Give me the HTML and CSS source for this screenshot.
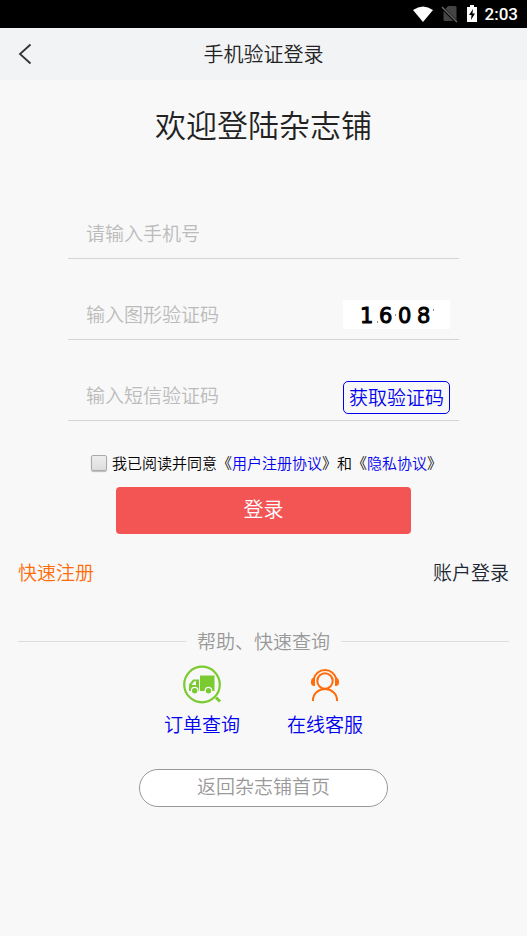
FILE: index.html
```html
<!DOCTYPE html>
<html lang="zh-CN">
<head>
<meta charset="utf-8">
<meta name="viewport" content="width=device-width, initial-scale=1">
<title>手机验证登录</title>
<link rel="stylesheet" href="styles.css">
</head>
<body>
<div class="status-bar">
  <svg width="22" height="18" viewBox="0 0 22 18" aria-hidden="true"><path d="M1 5Q11-2 21 5L11 17Z" fill="#fff"/></svg>
  <svg width="18" height="18" viewBox="0 0 18 18" aria-hidden="true"><path d="M7 1h7q1.500 0 1.500 1.500V16H4q-1.500 0-1.500-1.500V6Z" fill="#444"/><path d="M1 2.500 15.500 17" stroke="#000" stroke-width="3"/><path d="M1 2 16 17" stroke="#666" stroke-width="1.500"/></svg>
  <svg width="12" height="18" viewBox="0 0 12 18" aria-hidden="true"><path d="M1 2h3V0h4v2h3v15H1Z" fill="#fff"/><path d="M7 4 3 10h2.500L5 15l4-6.500H6.500Z" fill="#000"/></svg>
  <span class="clock">2:03</span>
</div>
<header class="header">
  <a class="back" href="#" aria-label="返回"><svg width="14" height="22" viewBox="0 0 14 22" aria-hidden="true"><path d="M12.500 1.500 2 11l10.500 9.500" fill="none" stroke="#333" stroke-width="1.800"/></svg></a>
  <h1 class="header-title">手机验证登录</h1>
</header>
<main>
  <h2 class="welcome">欢迎登陆杂志铺</h2>
  <form class="form">
    <div class="field">
      <input class="input" type="tel" placeholder="请输入手机号" aria-label="手机号">
    </div>
    <div class="field">
      <input class="input" type="text" placeholder="输入图形验证码" aria-label="图形验证码">
      <svg class="captcha" viewBox="0 0 107 29" role="img" aria-label="图形验证码">
        <text x="17 36 55 74" y="23">1608</text>
        <path d="M34 22h1M52 15h1M90 10h1" stroke="#222" stroke-width="1"/>
        <path d="M79 18l4 2M77 11l3 1" stroke="#fff" stroke-width="1"/>
      </svg>
    </div>
    <div class="field">
      <input class="input" type="text" placeholder="输入短信验证码" aria-label="短信验证码">
      <button class="get-code" type="button">获取验证码</button>
    </div>
    <div class="agree">
      <input class="check" type="checkbox" id="agree">
      <label for="agree">我已阅读并同意《<a href="#">用户注册协议</a>》和《<a href="#">隐私协议</a>》</label>
    </div>
    <button class="submit" type="submit">登录</button>
  </form>
  <nav class="account-links">
    <a class="register" href="#">快速注册</a>
    <a class="account" href="#">账户登录</a>
  </nav>
  <div class="divider">帮助、快速查询</div>
  <nav class="services">
    <a class="service" href="#">
      <svg width="40" height="40" viewBox="0 0 40 40" aria-hidden="true">
        <circle cx="20" cy="19.500" r="17.800" fill="none" stroke="#7acb30" stroke-width="2.200"/>
        <path d="m34 32.500 4 4" stroke="#7acb30" stroke-width="3"/>
        <path d="M18 10.500H32.500V26H18ZM7 26v-6.500L11 14.500h6V26Z" fill="#7acb30"/>
        <path d="M9.500 20l2.800-3.700H14V20Z" fill="#f8f8f8"/>
        <g fill="#7acb30" stroke="#f8f8f8" stroke-width="1.200"><circle cx="12.700" cy="25.700" r="3.300"/><circle cx="26.500" cy="25.700" r="3.300"/></g>
      </svg>
      <span>订单查询</span>
    </a>
    <a class="service" href="#">
      <svg width="40" height="40" viewBox="0 0 40 40" aria-hidden="true">
        <g fill="none" stroke="#ff6c0a" stroke-width="2"><circle cx="20" cy="16" r="7.700"/><path d="M8.500 14.500a11.700 11.700 0 0 1 23 0M8 36v-1a12 11 0 0 1 24 0v1"/></g>
        <path d="M10 12v9H8.500Q6 20.500 6 18v-2q0-2.500 2.500-3.500ZM30 12v9h1.500q2.500-.5 2.500-3v-2q0-2.500-2.500-3.500Z" fill="#ff6c0a"/>
      </svg>
      <span>在线客服</span>
    </a>
  </nav>
  <a class="home" href="#">返回杂志铺首页</a>
</main>
</body>
</html>
```
FILE: styles.css
```css
* {
  box-sizing: border-box;
}

body {
  margin: 0;
  background: #f8f8f8;
  color: #000;
  font-family: "Noto Sans CJK SC", sans-serif;
  font-size: 19px;
  font-weight: 350;
  line-height: 28px;
}

a {
  color: #0000ee;
  text-decoration: none;
}

button,
input {
  font: inherit;
}

svg {
  display: block;
}

.status-bar {
  display: flex;
  align-items: center;
  justify-content: flex-end;
  gap: 7px;
  height: 28px;
  padding-right: 9px;
  background: #000;
}

.clock {
  color: #fff;
  font: 500 17px/28px Roboto, sans-serif;
}

.header {
  display: grid;
  grid-template-columns: 48px 1fr 48px;
  align-items: center;
  height: 52px;
  background: #f2f3f5;
}

.back {
  padding-left: 18px;
}

.header-title {
  margin: 0;
  color: #222;
  font-size: 20px;
  font-weight: 350;
  text-align: center;
}

.welcome {
  margin: 22px 0 32px;
  color: #222;
  font-size: 31px;
  font-weight: 350;
  line-height: 44px;
  text-align: center;
}

.form {
  display: flex;
  flex-direction: column;
  padding: 0 68px;
}

.field {
  display: flex;
  align-items: center;
  height: 81px;
  padding: 30px 9px 0 18px;
  border-bottom: 1px solid #d5d5d5;
}

.input {
  flex: 1;
  min-width: 0;
  height: 30px;
  padding: 0 0 2px;
  border: 0;
  outline: 0;
  background: transparent;
  color: #333;
}

.input::placeholder {
  color: #bbb;
}

.captcha {
  width: 107px;
  height: 29px;
  background: #fff;
}

.captcha text {
  fill: #000;
  stroke: #000;
  stroke-width: 1px;
  font-family: "DejaVu Sans", sans-serif;
  font-size: 21px;
  font-weight: 400;
}

.get-code {
  width: 107px;
  height: 33px;
  margin-top: 4px;
  padding: 0;
  border: 1px solid #0000ee;
  border-radius: 5px;
  background: transparent;
  color: #0000ee;
  line-height: 28px;
}

.agree {
  display: flex;
  align-items: center;
  justify-content: center;
  gap: 5px;
  height: 66px;
  padding: 18px 0 0 6px;
  font-size: 15px;
  white-space: nowrap;
}

.check {
  width: 16px;
  height: 16px;
  margin: 0;
  border: 1px solid #aaa;
  border-radius: 2px;
  background: linear-gradient(#eee, #ddd);
  box-shadow: 0 1px 1px #bbb;
  appearance: none;
}

.check:checked {
  background: #0000ee;
}

.submit {
  height: 47px;
  margin: 0 48px;
  padding: 0 0 3px;
  border: 0;
  border-radius: 4px;
  background: #f35454;
  color: #fff;
  font-size: 20px;
}

.account-links {
  display: flex;
  justify-content: space-between;
  padding: 24px 18px 0;
}

.register {
  color: #ff6c0a;
}

.account {
  color: #222633;
}

.divider {
  display: flex;
  align-items: center;
  gap: 11px;
  margin: 41px 18px 10px;
  color: #999;
}

.divider::before,
.divider::after {
  flex: 1;
  height: 1px;
  background: #ddd;
  content: "";
}

.services {
  display: flex;
  justify-content: center;
  gap: 47px;
}

.service {
  display: flex;
  flex-direction: column;
  align-items: center;
  gap: 5px;
}

.home {
  display: block;
  width: 249px;
  height: 38px;
  margin: 31px auto 0;
  border: 1px solid #999;
  border-radius: 19px;
  background: #fff;
  color: #999;
  line-height: 32px;
  text-align: center;
}
```
